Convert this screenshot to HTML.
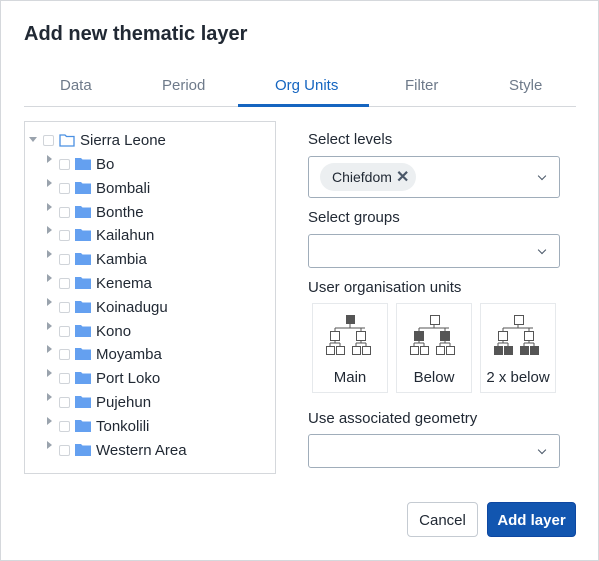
<!DOCTYPE html><html><head><style>
*{box-sizing:border-box;margin:0;padding:0}
body{width:599px;height:561px;background:#fff;font-family:"Liberation Sans",sans-serif;color:#212934;position:relative;overflow:hidden}
.a{position:absolute}
.frame{left:0;top:0;width:599px;height:561px;border:1px solid #d5d8dc}
.t{white-space:nowrap;font-size:15px;line-height:18px}
.tab{top:77px;font-size:15px;color:#6e7a8a;white-space:nowrap}
.sel{border:1px solid #a0adba;border-radius:3px;background:#fff}
.chev{position:absolute;right:14px;width:6px;height:6px;border-right:1.2px solid #4a5768;border-bottom:1.2px solid #4a5768;transform:rotate(45deg)}
.box{border:1px solid #e6e9ec;width:76px;height:90px;top:303px}
.cb{width:11px;height:11px;border:1px solid #d0d4d9;border-radius:2px;background:#fff}
.ar{width:0;height:0;border-top:4px solid transparent;border-bottom:4px solid transparent;border-left:5px solid #9aa3ad}
</style></head><body>
<div class="a frame"></div>
<div class="a" style="left:24px;top:23px;font-size:20px;font-weight:bold;color:#212934;white-space:nowrap">Add new thematic layer</div>
<div class="a tab" style="left:60px">Data</div>
<div class="a tab" style="left:162px">Period</div>
<div class="a tab" style="left:275px;color:#1565c0">Org Units</div>
<div class="a tab" style="left:405px">Filter</div>
<div class="a tab" style="left:509px">Style</div>
<div class="a" style="left:24px;top:106px;width:552px;height:1px;background:#d5d8dc"></div>
<div class="a" style="left:238px;top:104px;width:131px;height:3px;background:#1565c0"></div>

<div class="a" style="left:24px;top:121px;width:252px;height:353px;border:1px solid #d5d8dc"></div>
<div class="a" style="left:29px;top:137px;width:0;height:0;border-left:4px solid transparent;border-right:4px solid transparent;border-top:5px solid #9aa3ad"></div>
<div class="a cb" style="left:43px;top:135px"></div>
<svg class="a" style="left:59px;top:133px" width="16" height="14"><path d="M1 2h5l1.5 1.5H15V13H1z" fill="none" stroke="#4a90e2" stroke-width="1.3"/></svg>
<div class="a t" style="left:80px;top:132px">Sierra Leone</div>
<div id="rows"></div>

<div class="a t" style="left:308px;top:131px">Select levels</div>
<div class="a sel" style="left:308px;top:156px;width:252px;height:42px"><div class="chev" style="top:16px"></div></div>
<div class="a" style="left:320px;top:163px;width:96px;height:28px;border-radius:14px;background:#eceff1"></div>
<div class="a t" style="left:332px;top:168px;font-size:14px">Chiefdom</div>
<div class="a" style="left:396px;top:167px;font-size:16px;color:#4a5768;font-weight:bold">✕</div>
<div class="a t" style="left:308px;top:209px">Select groups</div>
<div class="a sel" style="left:308px;top:234px;width:252px;height:34px"><div class="chev" style="top:12px"></div></div>
<div class="a t" style="left:308px;top:279px">User organisation units</div>
<div class="a box" style="left:312px"></div>
<div class="a box" style="left:396px"></div>
<div class="a box" style="left:480px"></div>
<svg class="a" style="left:312px;top:303px" width="244" height="60">
<defs><g id="tr" stroke="#555" stroke-width="1" fill="none">
<path d="M38 21v4M23 25h30M23 25v3M49 25v3M23 37v3M49 37v3M18 40h10M44 40h10M18 40v3M28 40v3M44 40v3M54 40v3"/>
</g></defs>
<g><use href="#tr"/><rect x="34" y="12" width="9" height="9" fill="#555"/>
<g fill="#fff" stroke="#555"><rect x="18.5" y="28.5" width="9" height="9"/><rect x="44.5" y="28.5" width="9" height="9"/><rect x="14.5" y="43.5" width="8" height="8"/><rect x="24.5" y="43.5" width="8" height="8"/><rect x="40.5" y="43.5" width="8" height="8"/><rect x="50.5" y="43.5" width="8" height="8"/></g></g>
<g transform="translate(84 0)"><use href="#tr"/><rect x="34.5" y="12.5" width="9" height="9" fill="#fff" stroke="#555"/>
<rect x="18" y="28" width="10" height="10" fill="#555"/><rect x="44" y="28" width="10" height="10" fill="#555"/>
<g fill="#fff" stroke="#555"><rect x="14.5" y="43.5" width="8" height="8"/><rect x="24.5" y="43.5" width="8" height="8"/><rect x="40.5" y="43.5" width="8" height="8"/><rect x="50.5" y="43.5" width="8" height="8"/></g></g>
<g transform="translate(168 0)"><use href="#tr"/><g fill="#fff" stroke="#555"><rect x="34.5" y="12.5" width="9" height="9"/><rect x="18.5" y="28.5" width="9" height="9"/><rect x="44.5" y="28.5" width="9" height="9"/></g>
<g fill="#555"><rect x="14" y="43" width="9" height="9"/><rect x="24" y="43" width="9" height="9"/><rect x="40" y="43" width="9" height="9"/><rect x="50" y="43" width="9" height="9"/></g></g>
</svg>
<div class="a t" style="left:312px;top:369px;width:76px;text-align:center">Main</div>
<div class="a t" style="left:396px;top:369px;width:76px;text-align:center">Below</div>
<div class="a t" style="left:480px;top:369px;width:76px;text-align:center">2 x below</div>
<div class="a t" style="left:308px;top:410px">Use associated geometry</div>
<div class="a sel" style="left:308px;top:434px;width:252px;height:34px"><div class="chev" style="top:12px"></div></div>

<div class="a" style="left:407px;top:502px;width:71px;height:35px;border:1px solid #c5cbd2;border-radius:4px;background:#fff;text-align:center;line-height:35px;font-size:15px">Cancel</div>
<div class="a" style="left:487px;top:502px;width:89px;height:35px;border:1px solid #0d47a1;border-radius:4px;background:#1256b0;color:#fff;text-align:center;line-height:35px;font-size:15px;font-weight:bold">Add layer</div>
<script>
var n=["Bo","Bombali","Bonthe","Kailahun","Kambia","Kenema","Koinadugu","Kono","Moyamba","Port Loko","Pujehun","Tonkolili","Western Area"],h="";
n.forEach(function(s,i){var y=164+i*23.8;
h+='<div class="a ar" style="left:47px;top:'+(y-9)+'px"></div><div class="a cb" style="left:59px;top:'+(y-5)+'px"></div><svg class="a" style="left:75px;top:'+(y-7)+'px" width="16" height="14"><path d="M0 1h6l1.5 1.5H16V13H0z" fill="#64a0f0"/></svg><div class="a t" style="left:96px;top:'+(y-8)+'px">'+s+'</div>';});
document.getElementById("rows").innerHTML=h;
</script>
</body></html>
